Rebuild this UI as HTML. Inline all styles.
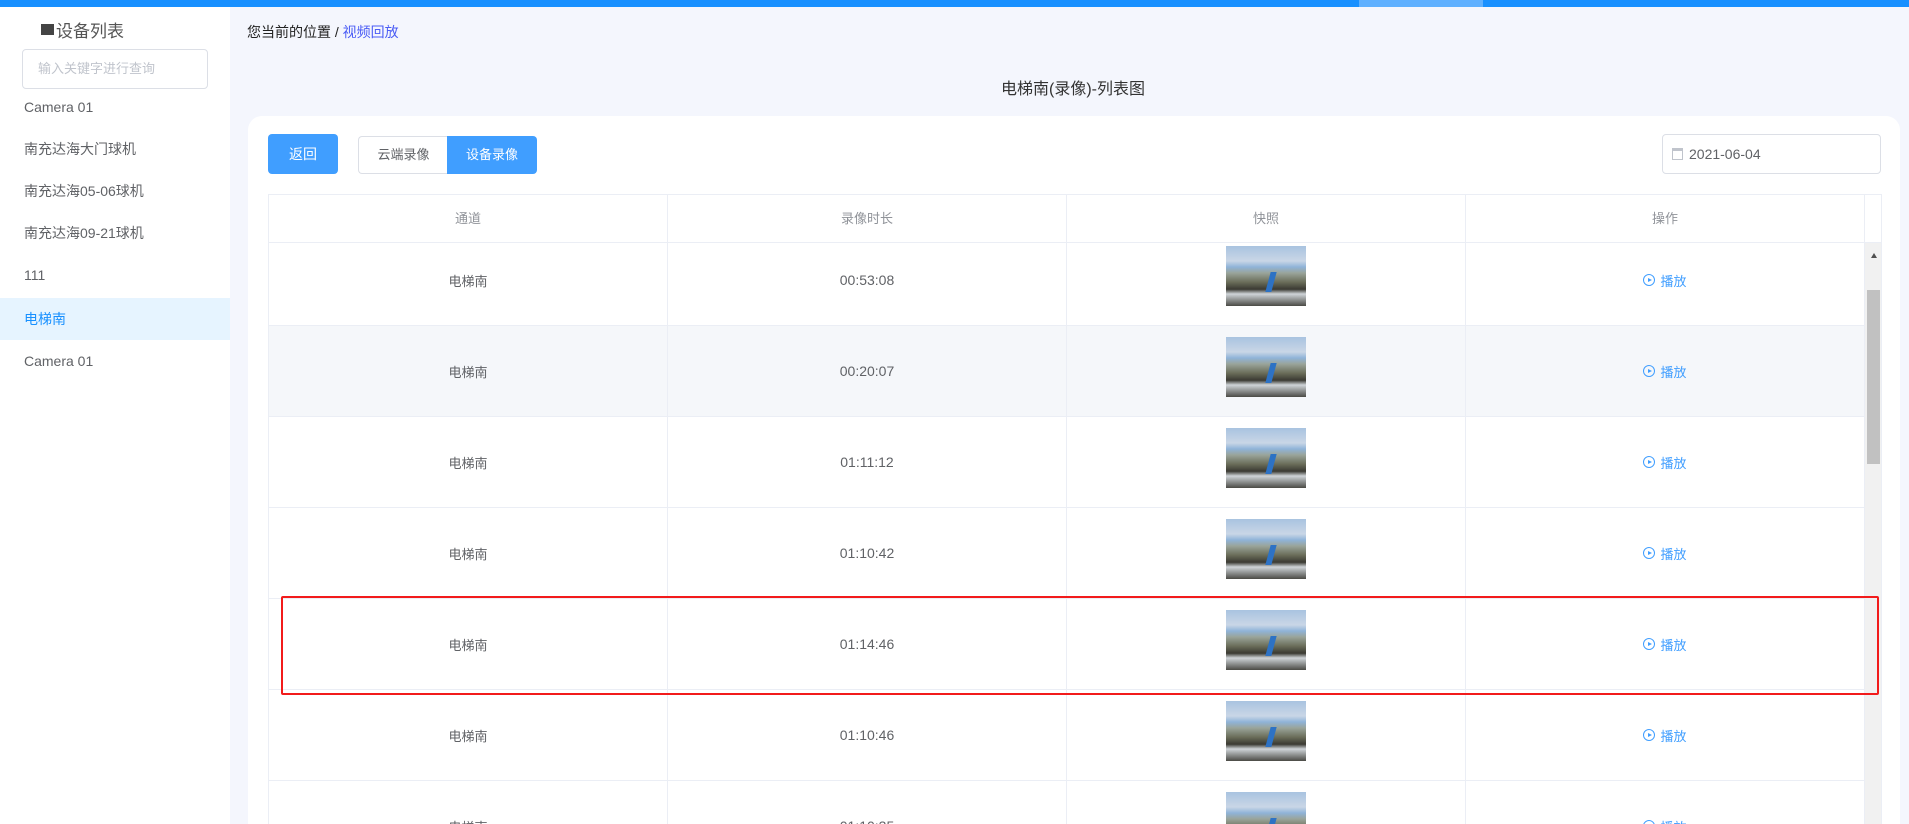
<!DOCTYPE html>
<html style="width:1909px;height:824px;overflow:hidden"><head><meta charset="utf-8"><style>
*{margin:0;padding:0;box-sizing:border-box}
body{width:1909px;height:824px;overflow:hidden;background:#f4f6fd;font-family:"Liberation Sans","Noto Sans CJK SC",sans-serif;position:relative;color:#606266}
.abs{position:absolute}
.top{left:0;top:0;width:1909px;height:7px;background:#1890ff}
.side{left:0;top:7px;width:230px;height:817px;background:#fff}
.item{position:absolute;left:0;width:230px;height:42px;line-height:42px;padding-left:24px;font-size:14px;color:#606266}
.th{position:absolute;top:0;height:47px;line-height:47px;text-align:center;font-size:13px;color:#909399;border-right:1px solid #ebeef5}
.row{position:absolute;left:0;width:1596px;border-bottom:1px solid #ebeef5}
.c{position:absolute;top:0;height:100%;text-align:center;font-size:13px;color:#606266;display:flex;align-items:center;justify-content:center;border-right:1px solid #ebeef5}
.r1 .c{padding-bottom:8px}
.c.t{align-items:flex-start;padding-top:11px}
.r1 .c.t{padding-top:3px;padding-bottom:0}
.thumb{width:80px;height:60px;background:linear-gradient(180deg,#a9c3e0 0%,#c9d6e6 25%,#8fb3d8 35%,#9aa49a 45%,#6b6e5a 60%,#3b3a33 72%,#cfd4d8 80%,#4a4a45 100%);position:relative;overflow:hidden}
.thumb:after{content:"";position:absolute;left:42px;top:26px;width:6px;height:20px;background:#2d72c4;transform:skewX(-15deg)}
.play{color:#409eff;font-size:13px;display:flex;align-items:center;gap:5px}
.play i{display:inline-block;width:12px;height:12px;border:1px solid #409eff;border-radius:50%;position:relative}
.play i:after{content:"";position:absolute;left:3.5px;top:2.5px;border-left:4px solid #409eff;border-top:2.5px solid transparent;border-bottom:2.5px solid transparent}
</style></head><body>
<div class="abs top"></div>
<div class="abs" style="left:1359px;top:0;width:124px;height:7px;background:#5eb0ff"></div>
<div class="abs side">
 <div class="abs" style="left:41px;top:10px;font-size:17px;color:#555;display:flex;align-items:center"><span style="display:inline-block;width:13px;height:11px;background:#444;margin-right:2px"></span>设备列表</div>
 <div class="abs" style="left:22px;top:42px;width:186px;height:40px;border:1px solid #dcdfe6;border-radius:4px;font-size:13px;color:#c0c4cc;line-height:38px;padding-left:15px">输入关键字进行查询</div>
 <div class="item" style="top:79px">Camera 01</div>
 <div class="item" style="top:121px">南充达海大门球机</div>
 <div class="item" style="top:163px">南充达海05-06球机</div>
 <div class="item" style="top:205px">南充达海09-21球机</div>
 <div class="item" style="top:247px">111</div>
 <div class="item" style="top:291px;background:#e6f4ff;color:#1890ff">电梯南</div>
 <div class="item" style="top:333px">Camera 01</div>
</div>
<div class="abs" style="left:247px;top:22px;font-size:14px;color:#222">您当前的位置 / <span style="color:#4a5cf5">视频回放</span></div>
<div class="abs" style="left:0;width:2146px;top:75px;text-align:center;font-size:16px;color:#333">电梯南(录像)-列表图</div>
<div class="abs" style="left:248px;top:116px;width:1652px;height:708px;background:#fff;border-radius:14px 14px 0 0"></div>
<div class="abs" style="left:268px;top:134px;width:70px;height:40px;background:#409eff;border-radius:4px;color:#fff;font-size:14px;text-align:center;line-height:40px">返回</div>
<div class="abs" style="left:358px;top:136px;width:90px;height:38px;border:1px solid #dcdfe6;border-right:none;border-radius:4px 0 0 4px;font-size:13px;color:#606266;text-align:center;line-height:36px">云端录像</div>
<div class="abs" style="left:447px;top:136px;width:90px;height:38px;background:#409eff;border-radius:0 4px 4px 0;font-size:13px;color:#fff;text-align:center;line-height:38px">设备录像</div>
<div class="abs" style="left:1662px;top:134px;width:219px;height:40px;border:1px solid #dcdfe6;border-radius:4px;font-size:14px;color:#606266;line-height:38px;padding-left:26px">2021-06-04
 <span class="abs" style="left:9px;top:13px;width:11px;height:12px;border:1px solid #c0c4cc;border-top-width:3px"></span></div>
<div class="abs" style="left:268px;top:194px;width:1614px;height:630px;border:1px solid #ebeef5;border-bottom:none;overflow:hidden">
 <div class="abs" style="left:0;top:0;width:1614px;height:48px;border-bottom:1px solid #ebeef5">
  <div class="th" style="left:0;width:399px">通道</div>
  <div class="th" style="left:399px;width:399px">录像时长</div>
  <div class="th" style="left:798px;width:399px">快照</div>
  <div class="th" style="left:1197px;width:399px">操作</div>
 </div>
 <div class="abs" style="left:1596px;top:48px;width:18px;height:600px;background:#f1f1f1">
  <div class="abs" style="left:6px;top:10px;border-bottom:5px solid #505050;border-left:3.5px solid transparent;border-right:3.5px solid transparent"></div>
  <div class="abs" style="left:2px;top:47px;width:13px;height:174px;background:#c1c1c1"></div>
 </div>
 <div class="row r1" style="top:48px;height:83px"><div class="c" style="left:0;width:399px">电梯南</div><div class="c" style="left:399px;width:399px;font-size:14px">00:53:08</div><div class="c t" style="left:798px;width:399px"><div class="thumb"></div></div><div class="c" style="left:1197px;width:399px"><span class="play"><i></i>播放</span></div></div>
 <div class="row" style="top:131px;height:91px;background:#f5f7fa"><div class="c" style="left:0;width:399px">电梯南</div><div class="c" style="left:399px;width:399px;font-size:14px">00:20:07</div><div class="c t" style="left:798px;width:399px"><div class="thumb"></div></div><div class="c" style="left:1197px;width:399px"><span class="play"><i></i>播放</span></div></div>
 <div class="row" style="top:222px;height:91px"><div class="c" style="left:0;width:399px">电梯南</div><div class="c" style="left:399px;width:399px;font-size:14px">01:11:12</div><div class="c t" style="left:798px;width:399px"><div class="thumb"></div></div><div class="c" style="left:1197px;width:399px"><span class="play"><i></i>播放</span></div></div>
 <div class="row" style="top:313px;height:91px"><div class="c" style="left:0;width:399px">电梯南</div><div class="c" style="left:399px;width:399px;font-size:14px">01:10:42</div><div class="c t" style="left:798px;width:399px"><div class="thumb"></div></div><div class="c" style="left:1197px;width:399px"><span class="play"><i></i>播放</span></div></div>
 <div class="row" style="top:404px;height:91px"><div class="c" style="left:0;width:399px">电梯南</div><div class="c" style="left:399px;width:399px;font-size:14px">01:14:46</div><div class="c t" style="left:798px;width:399px"><div class="thumb"></div></div><div class="c" style="left:1197px;width:399px"><span class="play"><i></i>播放</span></div></div>
 <div class="row" style="top:495px;height:91px"><div class="c" style="left:0;width:399px">电梯南</div><div class="c" style="left:399px;width:399px;font-size:14px">01:10:46</div><div class="c t" style="left:798px;width:399px"><div class="thumb"></div></div><div class="c" style="left:1197px;width:399px"><span class="play"><i></i>播放</span></div></div>
 <div class="row" style="top:586px;height:91px"><div class="c" style="left:0;width:399px">电梯南</div><div class="c" style="left:399px;width:399px;font-size:14px">01:10:35</div><div class="c t" style="left:798px;width:399px"><div class="thumb"></div></div><div class="c" style="left:1197px;width:399px"><span class="play"><i></i>播放</span></div></div>
</div>
<div class="abs" style="left:281px;top:596px;width:1598px;height:99px;border:2px solid #f21b1b;border-radius:2px"></div>
</body></html>
